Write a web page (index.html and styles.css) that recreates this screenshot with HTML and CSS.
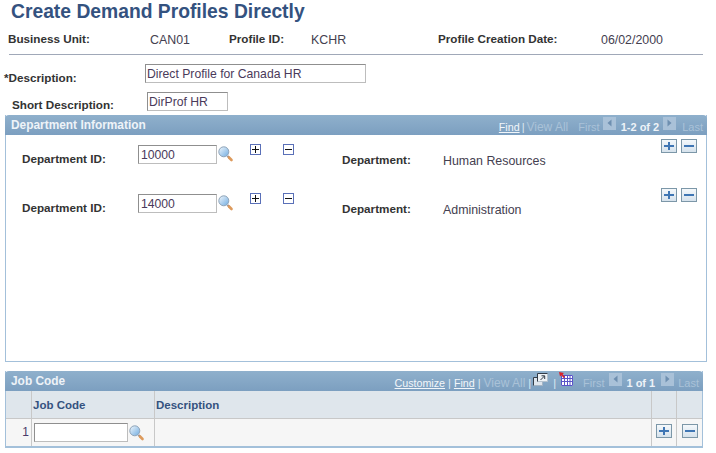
FILE: index.html
```html
<!DOCTYPE html>
<html lang="en">
<head>
<meta charset="utf-8">
<title>Create Demand Profiles Directly</title>
<link rel="stylesheet" href="styles.css">
</head>
<body>
<svg class="defs" width="0" height="0" aria-hidden="true">
  <defs>
    <linearGradient id="lens" x1="0" y1="0" x2="1" y2="1"><stop offset="0" stop-color="#f2f8fd"/><stop offset="1" stop-color="#6fabe0"/></linearGradient>
    <symbol id="lookup" viewBox="0 0 16 16">
      <path d="M9.500 10l2 2" stroke="#8a8a96" stroke-width="2"/>
      <path d="M11 11.500l2.500 2.500" stroke="#dd9a5c" stroke-width="2.600" stroke-linecap="round"/>
      <circle cx="5.800" cy="5.800" r="5" fill="url(#lens)" stroke="#8ea3b8"/>
    </symbol>
    <symbol id="tri-left" viewBox="0 0 13 13"><rect width="13" height="13" fill="#a9c1d8"/><path d="M8.500 2.500v7l-4-3.500z" fill="#6e8fb0"/></symbol>
    <symbol id="tri-right" viewBox="0 0 13 13"><rect width="13" height="13" fill="#a9c1d8"/><path d="M4.500 2.500v7l4-3.500z" fill="#6e8fb0"/></symbol>
  </defs>
</svg>

<h1 class="title">Create Demand Profiles Directly</h1>

<div class="keys">
  <span class="lab">Business Unit:</span><span class="val">CAN01</span>
  <span class="lab">Profile ID:</span><span class="val">KCHR</span>
  <span class="lab">Profile Creation Date:</span><span class="val">06/02/2000</span>
</div>
<hr class="rule">

<div class="field-row row-desc">
  <span class="lab desc-lab">*Description:</span>
  <input class="txt desc-in" value="Direct Profile for Canada HR">
</div>
<div class="field-row row-short">
  <span class="lab short-lab">Short Description:</span>
  <input class="txt short-in" value="DirProf HR">
</div>

<section class="panel dept">
  <header class="bar">
    <span class="bar-title">Department Information</span>
    <nav class="nav">
      <a class="link">Find</a><i class="sep">|</i><span class="dim view">View All</span>
      <span class="dim first">First</span><svg class="arrow"><use href="#tri-left"/></svg>
      <b class="count">1-2 of 2</b><svg class="arrow"><use href="#tri-right"/></svg><span class="dim last">Last</span>
    </nav>
  </header>
  <div class="dept-row">
    <span class="lab id-lab">Department ID:</span>
    <input class="txt id-in" value="10000">
    <svg class="lk"><use href="#lookup"/></svg>
    <span class="mini plus"></span><span class="mini minus"></span>
    <span class="lab dname-lab">Department:</span>
    <span class="val dname">Human Resources</span>
    <span class="btns"><span class="btn add"></span><span class="btn del"></span></span>
  </div>
  <div class="dept-row">
    <span class="lab id-lab">Department ID:</span>
    <input class="txt id-in" value="14000">
    <svg class="lk"><use href="#lookup"/></svg>
    <span class="mini plus"></span><span class="mini minus"></span>
    <span class="lab dname-lab">Department:</span>
    <span class="val dname">Administration</span>
    <span class="btns"><span class="btn add"></span><span class="btn del"></span></span>
  </div>
</section>

<section class="panel job">
  <header class="bar">
    <span class="bar-title">Job Code</span>
    <nav class="nav">
      <a class="link">Customize</a><i class="sep">|</i><a class="link">Find</a><i class="sep">|</i><span class="dim view">View All</span><i class="sep">|</i>
      <svg class="ic-pop" viewBox="0 0 15 13"><path d="M0.500 12.500v-8h9v8z" fill="#dfe6ee" stroke="#a5b4c4"/><path d="M0.500 12.500v-8h4" fill="none" stroke="#333c48"/><path d="M4.500 8.500v-8h10v8z" fill="#eef2f6" stroke="#b4c1ce"/><path d="M4.500 8.500v-8h10" fill="none" stroke="#333c48"/><path d="M7.500 7l4-4M8.500 2.800h3.200V6" fill="none" stroke="#333c48"/></svg>
      <i class="sep">|</i>
      <svg class="ic-grid" viewBox="0 0 14 14"><rect x="2" y="3" width="12" height="11" fill="#fff"/><path d="M2.500 3.500h11v10h-11zM2.500 6.500h11M2.500 9.500h11M5.500 3.500v10M8.500 3.500v10M11 3.500v10" fill="none" stroke="#5a55c8"/><path d="M0 0l5 1-1.400 1.200L6 5 4.500 6 2.400 3.200 1 4.500z" fill="#d8232a"/></svg>
      <span class="dim first">First</span><svg class="arrow"><use href="#tri-left"/></svg>
      <b class="count">1 of 1</b><svg class="arrow"><use href="#tri-right"/></svg><span class="dim last">Last</span>
    </nav>
  </header>
  <div class="grid-table">
    <div class="th"></div>
    <div class="th">Job Code</div>
    <div class="th">Description</div>
    <div class="th"></div>
    <div class="th"></div>
    <div class="td num">1</div>
    <div class="td code"><input class="txt job-in"><svg class="lk"><use href="#lookup"/></svg></div>
    <div class="td"></div>
    <div class="td ctr"><span class="btn add"></span></div>
    <div class="td ctr"><span class="btn del"></span></div>
  </div>
</section>
</body>
</html>
```
FILE: styles.css
```css
* { box-sizing: border-box; }
html, body { margin: 0; padding: 0; }
body { width: 716px; height: 453px; overflow: hidden; background: #fff; font: 12px "Liberation Sans", Arial, sans-serif; color: #3c3c3c; }
.defs { position: absolute; }

.title { margin: 0; padding: 0 0 0 11px; height: 24px; line-height: 23px; font-size: 19.3px; font-weight: bold; color: #34527f; }

.lab { font-size: 11.700px; font-weight: bold; color: #333; }
.val { font-size: 12.400px; color: #444050; }

.keys { display: grid; grid-template-columns: 142px 79px 82px 127px 163px auto; padding: 8px 0 0 8px; height: 30px; line-height: 13px; }
.keys .val { padding-top: 2px; }
.rule { margin: 0 13px 0 9px; height: 1px; border: 0; background: #a0a8b8; }

.txt { display: block; margin: 0; padding: 0 0 0 1px; height: 19px; font: 12.200px "Liberation Sans", Arial, sans-serif; color: #4a3a5a; background: #fff; border: 1px solid #bdbdbd; border-top-color: #8f8f8f; border-left-color: #8f8f8f; border-radius: 0; }

.field-row { display: flex; }
.row-desc { padding-top: 9px; height: 37px; }
.desc-lab { width: 145px; padding: 7px 0 0 4px; }
.desc-in { width: 221px; }
.row-short { height: 23px; }
.short-lab { width: 147px; padding: 6px 0 0 12px; }
.short-in { width: 81px; }

.panel { margin: 0 9px 0 5px; border: 1px solid #a3c0da; border-top: 0; }
.dept { height: 247px; }
.job { margin: 9px 13px 0 5px; height: 77px; border-bottom: 2px solid #a3c0da; }

.bar { display: flex; justify-content: space-between; align-items: center; margin: 0 -1px; height: 20px; padding: 0 4px 0 6px; border-radius: 4px 4px 0 0; background: linear-gradient(#8fb0cc, #7c9fc0); }
.bar-title { font-size: 11.900px; font-weight: bold; color: #eef3f8; line-height: 18px; }
.nav { display: flex; align-self: stretch; align-items: flex-start; padding-top: 6px; font-size: 11px; line-height: 13px; color: #a9c1d8; }
.link { font-size: 10.700px; color: #f2f6fa; text-decoration: underline; }
.sep { font-style: normal; color: #dfe9f2; margin: 0 3px; }
.dim { color: #aac2d8; }
.view { font-size: 12px; }
.first { margin-left: 10px; margin-right: 5px; }
.last { margin-left: 4px; }
.arrow { width: 13px; height: 13px; margin-top: -4px; }
.count { color: #eef3f8; margin: 0 6px 0 4px; }
.dept .sep { margin: 0 2px; }
.dept .first { margin-right: 3px; }
.dept .count { margin: 0 4px 0 5px; }
.dept .last { margin-left: 6px; }
.ic-pop { width: 15px; height: 13px; margin: -4px 2px 0 -1px; }
.ic-grid { width: 14px; height: 14px; margin: -5px 0 0 0; }

.dept-row { display: flex; height: 49px; }
.id-lab { width: 116px; margin-left: 16px; padding-top: 17px; }
.id-in { width: 79px; margin-top: 10px; padding-left: 2px; }
.lk { display: block; width: 16px; height: 16px; margin: 11px 0 0 1px; flex: none; }
.mini { position: relative; display: block; width: 11px; height: 11px; margin-top: 9px; border: 1px solid #5a70b8; background: #fff; }
.mini::before, .plus::after { content: ""; position: absolute; background: #111; }
.mini::before { left: 1px; right: 1px; top: 4px; height: 1px; }
.plus::after { top: 1px; bottom: 1px; left: 4px; width: 1px; }
.plus { margin-left: 16px; }
.minus { margin-left: 22px; }
.dname-lab { margin-left: 48px; width: 101px; padding-top: 18px; }
.dname { width: 218px; padding-top: 19px; }
.btns { display: flex; gap: 4px; margin-top: 4px; }
.btn { position: relative; display: block; width: 16px; height: 14px; border: 1px solid #7c97a8; background: linear-gradient(#f4f8fb, #d6e2ec); }
.btn::before, .add::after { content: ""; position: absolute; background: #3f76b4; }
.btn::before { left: 2px; right: 2px; top: 5px; height: 2px; }
.add::after { top: 2px; bottom: 2px; left: 6px; width: 2px; }

.grid-table { display: grid; grid-template-columns: 26px 123px 1fr 25px 25px; grid-template-rows: 28px 27px; }
.th, .td { border-right: 1px solid #c8c8c8; }
.th { border-bottom: 1px solid #c8c8c8; background: #dfe6ec; color: #34527f; font-size: 11.500px; font-weight: bold; padding: 7px 0 0 1px; line-height: 14px; }
.td { background: #f6f6f6; }
.th:nth-child(5), .td:last-child { border-right: 0; }
.num { text-align: right; padding: 6px 2px 0 0; color: #4a3a6a; }
.code { display: flex; padding: 4px 0 0 2px; }
.job-in { width: 94px; }
.code .lk { margin: 2px 0 0 1px; }
.ctr { display: flex; justify-content: center; padding-top: 5px; }
```
